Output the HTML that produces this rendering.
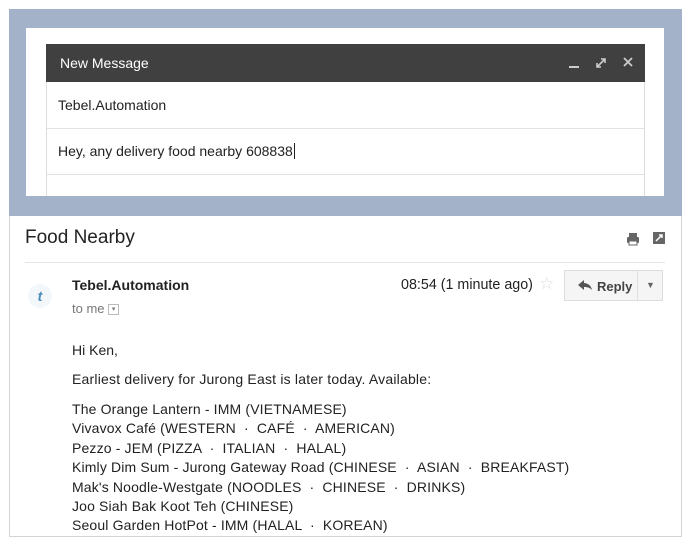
<!DOCTYPE html>
<html><head><style>
body{margin:0;width:691px;height:547px;background:#fff;font-family:"Liberation Sans",Arial,sans-serif;position:relative;overflow:hidden;color:#222}
.a{position:absolute}
</style></head><body>
<div class="a" style="left:9px;top:9px;width:673px;height:528px;border:1px solid #d4d4d4;box-sizing:border-box;background:#fff"></div>
<div class="a" style="left:9px;top:9px;width:673px;height:207px;background:#a3b2c8"></div>
<div class="a" style="left:26px;top:28px;width:638px;height:168px;background:#fff"></div>
<div class="a" style="left:46px;top:44px;width:599px;height:152px;border-left:1px solid #ddd;border-right:1px solid #ddd;box-sizing:border-box"></div>
<div class="a" style="left:46px;top:44px;width:599px;height:38px;background:#404040"></div>
<div class="a" style="left:60px;top:55px;color:#fff;font-size:14px">New Message</div>
<div class="a" style="left:569px;top:66px;width:10px;height:2px;background:#ccc"></div>
<svg class="a" style="left:594px;top:56px" width="14" height="14"><path d="M3 11L11 3M7 3h4v4M3 7v4h4" stroke="#ccc" stroke-width="1.6" fill="none"/></svg>
<svg class="a" style="left:622px;top:56px" width="12" height="12"><path d="M2 2L10 10M10 2L2 10" stroke="#ccc" stroke-width="1.8"/></svg>
<div class="a" style="left:58px;top:97px;font-size:14px">Tebel.Automation</div>
<div class="a" style="left:47px;top:128px;width:597px;height:1px;background:#e2e2e2"></div>
<div class="a" style="left:58px;top:143px;font-size:14px">Hey, any delivery food nearby 608838<span style="border-left:1px solid #222;margin-left:1px"></span></div>
<div class="a" style="left:47px;top:174px;width:597px;height:1px;background:#e2e2e2"></div>
<div class="a" style="left:25px;top:227px;font-size:19px;color:#222">Food Nearby</div>
<svg class="a" style="left:626px;top:232px" width="14" height="14"><rect x="3" y="1" width="8" height="4" fill="#666"/><rect x="1" y="5" width="12" height="6" rx="1" fill="#666"/><rect x="3" y="9" width="8" height="4" fill="#fff" stroke="#666"/></svg>
<svg class="a" style="left:652px;top:231px" width="14" height="14"><rect x="1" y="1" width="12" height="12" fill="#666"/><path d="M4 10L10 4M7 4h3v3" stroke="#fff" stroke-width="1.5" fill="none"/></svg>
<div class="a" style="left:25px;top:262px;width:640px;height:1px;background:#e5e5e5"></div>
<div class="a" style="left:28px;top:284px;width:24px;height:24px;border-radius:50%;background:#f3f7fa;color:#4a8ab8;font-style:italic;font-weight:bold;font-size:14px;text-align:center;line-height:24px">t</div>
<div class="a" style="left:72px;top:277px;font-size:14px;font-weight:bold">Tebel.Automation</div>
<div class="a" style="left:72px;top:301px;font-size:13px;color:#777">to me <span style="display:inline-block;width:9px;height:9px;border:1px solid #bbb;font-size:7px;line-height:9px;text-align:center;vertical-align:middle">▾</span></div>
<div class="a" style="left:401px;top:277px;font-size:14.3px;color:#222">08:54 (1 minute ago)</div>
<div class="a" style="left:539px;top:274px;font-size:17px;color:#ddd">☆</div>
<div class="a" style="left:564px;top:270px;width:99px;height:31px;border:1px solid #ddd;background:#f5f5f5;box-sizing:border-box"></div>
<div class="a" style="left:637px;top:271px;width:1px;height:29px;background:#e0e0e0"></div>
<svg class="a" style="left:577px;top:279px" width="16" height="12"><path d="M7 1L1 6L7 11V8C11 8 13 9 15 11C14 7 12 4.5 7 4Z" fill="#555"/></svg>
<div class="a" style="left:597px;top:279px;font-size:13px;font-weight:bold;color:#444">Reply</div>
<div class="a" style="left:646px;top:280px;font-size:9px;color:#666">▼</div>
<div class="a" style="left:72px;top:341px;font-size:14px;line-height:19.5px">Hi Ken,</div>
<div class="a" style="left:72px;top:370px;font-size:14px;line-height:19.5px;letter-spacing:0.2px">Earliest delivery for Jurong East is later today. Available:</div>
<div class="a" style="left:72px;top:400px;font-size:14px;line-height:19.4px;white-space:pre;letter-spacing:0.15px">The Orange Lantern - IMM (VIETNAMESE)
Vivavox Café (WESTERN  ·  CAFÉ  ·  AMERICAN)
Pezzo - JEM (PIZZA  ·  ITALIAN  ·  HALAL)
Kimly Dim Sum - Jurong Gateway Road (CHINESE  ·  ASIAN  ·  BREAKFAST)
Mak's Noodle-Westgate (NOODLES  ·  CHINESE  ·  DRINKS)
Joo Siah Bak Koot Teh (CHINESE)
Seoul Garden HotPot - IMM (HALAL  ·  KOREAN)</div>
</body></html>
